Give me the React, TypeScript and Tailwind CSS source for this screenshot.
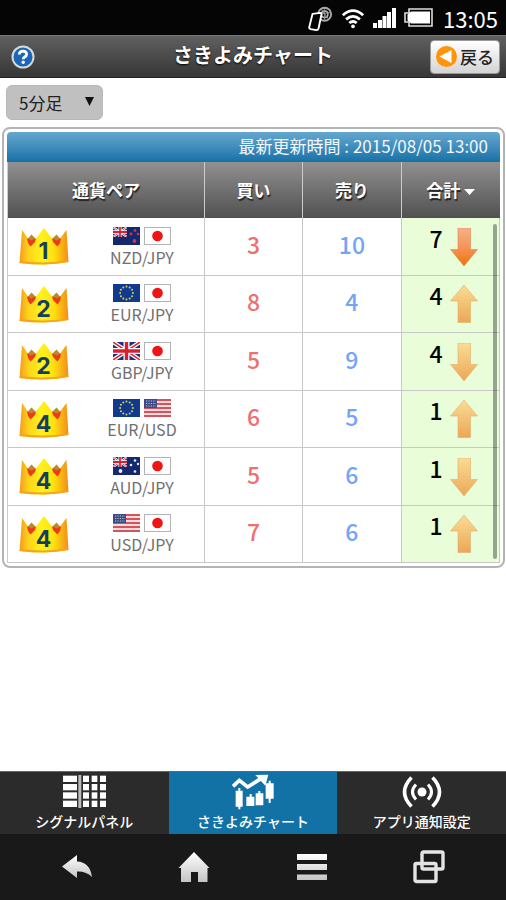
import React, { useState } from "react";

type FlagCode = "nz" | "au" | "jp" | "eu" | "gb" | "us";

interface PairRow {
  rank: number;
  pair: string;
  flags: [FlagCode, FlagCode];
  buy: number;
  sell: number;
  total: number;
  up: boolean;
}

const rows: PairRow[] = [
  { rank: 1, pair: "NZD/JPY", flags: ["nz", "jp"], buy: 3, sell: 10, total: 7, up: false },
  { rank: 2, pair: "EUR/JPY", flags: ["eu", "jp"], buy: 8, sell: 4, total: 4, up: true },
  { rank: 2, pair: "GBP/JPY", flags: ["gb", "jp"], buy: 5, sell: 9, total: 4, up: false },
  { rank: 4, pair: "EUR/USD", flags: ["eu", "us"], buy: 6, sell: 5, total: 1, up: true },
  { rank: 4, pair: "AUD/JPY", flags: ["au", "jp"], buy: 5, sell: 6, total: 1, up: false },
  { rank: 4, pair: "USD/JPY", flags: ["us", "jp"], buy: 7, sell: 6, total: 1, up: true },
];

function UnionJack({ w, h }: { w: number; h: number }) {
  return (
    <svg width={w} height={h} viewBox="0 0 27 18" preserveAspectRatio="none">
      <rect width="27" height="18" fill="#1c3180" />
      <path d="M0 0 27 18M27 0 0 18" stroke="#fff" strokeWidth="4" />
      <path d="M0 0 27 18M27 0 0 18" stroke="#d8283c" strokeWidth="1.5" />
      <path d="M13.500 0V18M0 9H27" stroke="#fff" strokeWidth="6" />
      <path d="M13.500 0V18M0 9H27" stroke="#d8202f" strokeWidth="3.400" />
    </svg>
  );
}

function Flag({ code }: { code: FlagCode }) {
  return (
    <svg width="27" height="18" viewBox="0 0 27 18" className="block" aria-hidden="true">
      {code === "gb" && <UnionJack w={27} h={18} />}
      {code === "jp" && (
        <>
          <rect x="0.5" y="0.5" width="26" height="17" fill="#fff" stroke="#b4b4b4" />
          <circle cx="13.500" cy="9" r="5.300" fill="#f01414" />
        </>
      )}
      {code === "eu" && (
        <>
          <rect width="27" height="18" fill="#123a8c" />
          {Array.from({ length: 12 }, (_, i) => (
            <circle
              key={i}
              cx={13.5 + 6.4 * Math.cos((i * Math.PI) / 6)}
              cy={9 + 6.4 * Math.sin((i * Math.PI) / 6)}
              r="1"
              fill="#d8cf5a"
            />
          ))}
        </>
      )}
      {code === "us" && (
        <>
          <rect width="27" height="18" fill="#f3dcdc" />
          {[0, 4, 8, 12, 16].map((y) => (
            <rect key={y} y={y} width="27" height="2" fill="#d4545e" />
          ))}
          <rect width="13" height="9" fill="#3c4a86" />
          {[2, 4.5, 7].map((y) => (
            <path key={y} d={`M2 ${y}H12`} stroke="#b9c2dd" strokeWidth="1" strokeDasharray="1.200 1.200" />
          ))}
        </>
      )}
      {(code === "nz" || code === "au") && (
        <>
          <rect width="27" height="18" fill="#14286e" />
          <UnionJack w={14} h={10} />
        </>
      )}
      {code === "nz" && (
        <g fill="#d0344e">
          <circle cx="22" cy="3.500" r="1.400" />
          <circle cx="18" cy="7" r="1.400" />
          <circle cx="25" cy="7" r="1.300" />
          <circle cx="21.500" cy="14" r="1.900" />
        </g>
      )}
      {code === "au" && (
        <g fill="#e6ecff">
          <circle cx="22" cy="3.500" r="1.300" />
          <circle cx="18" cy="8" r="1.300" />
          <circle cx="25" cy="7" r="1.200" />
          <circle cx="22" cy="14.500" r="1.300" />
          <circle cx="7.500" cy="14" r="1.900" />
        </g>
      )}
    </svg>
  );
}

function Crown({ rank }: { rank: number }) {
  return (
    <svg width="50" height="37" viewBox="0 0 50 37" role="img" aria-label={`${rank}位`} className="block">
      <defs>
        <linearGradient id="crown" x1="0" y1="0" x2="1" y2="0">
          <stop offset="0" stopColor="#f59a1c" />
          <stop offset="0.18" stopColor="#fdd31a" />
          <stop offset="0.45" stopColor="#fff21a" />
          <stop offset="0.7" stopColor="#ffe010" />
          <stop offset="1" stopColor="#f38c17" />
        </linearGradient>
      </defs>
      <path
        d="M3 2 9 10.500 17 10.500 25 0 33 10.500 41 10.500 47.500 2 49.500 34Q37 36 25 36.500 12 36.500 0.500 35Z"
        fill="url(#crown)"
      />
      <path d="M8 10.500H17L16 14 11.500 18.500 9 15ZM42 10.500H33L34 14 38.500 18.500 41 15Z" fill="#ee3a16" />
      <path d="M9 10.500 12.500 6.500 16.500 10.500 12 12.500ZM41 10.500 37.500 6.500 33.500 10.500 38 12.500Z" fill="#b98a2c" />
      <path d="M1 33Q25 36 49 32.500L49.500 34Q37 36 25 36.500 12 36.500 0.500 35Z" fill="#f5a51c" />
      <text
        x="24.500"
        y="31"
        textAnchor="middle"
        fill="#153f5c"
        className="font-['Inter',sans-serif] text-[23px] font-bold"
      >
        {rank}
      </text>
    </svg>
  );
}

function Arrow({ up, strong }: { up: boolean; strong: boolean }) {
  const fill = strong ? "url(#strongArrow)" : "url(#softArrow)";
  return (
    <svg width="28" height="38" viewBox="0 0 28 38" role="img" aria-label={up ? "上昇" : "下降"} className="block">
      <defs>
        <linearGradient id="strongArrow" x1="0" y1="0" x2="0" y2="1">
          <stop offset="0" stopColor="#f8b186" />
          <stop offset="0.5" stopColor="#f5945a" />
          <stop offset="1" stopColor="#f07208" />
        </linearGradient>
        <linearGradient id="softArrow" x1="0" y1="0" x2="0" y2="1">
          <stop offset="0" stopColor="#fbdc94" />
          <stop offset="1" stopColor="#eba758" />
        </linearGradient>
      </defs>
      <path
        d={up ? "M14 0 27.500 16H20.500V37.500H8V16H0.500Z" : "M8 0H20.500V21.500H27.500L14 38 0.500 21.500H8Z"}
        fill={fill}
        stroke={strong ? "#d98a50" : "#dfb06c"}
        strokeWidth="0.600"
      />
    </svg>
  );
}

function StatusBar() {
  return (
    <div className="flex h-[35px] items-center justify-end gap-2 bg-[#050505] pr-2 text-white">
      <svg width="26" height="28" viewBox="0 0 28 28" fill="none" aria-hidden="true">
        <circle cx="19" cy="10" r="7" stroke="#aaa" strokeWidth="2" />
        <circle cx="19" cy="10" r="3.500" stroke="#bbb" strokeWidth="1.600" />
        <path d="M15 4 23 15M12 10 26 8M19 3V17" stroke="#999" />
        <path d="M6 9.500 14 8.500Q16 8.500 15.500 10.500L12.500 25Q12 27 10 27L4 26Q2 25.500 2.500 23.500Z" fill="#050505" stroke="#fff" strokeWidth="2" />
      </svg>
      <svg width="24" height="24" viewBox="0 0 26 24" fill="none" stroke="#fff" strokeWidth="3" aria-hidden="true">
        <path d="M2 9Q13 -1 24 9M5.500 13.500Q13 7 20.500 13.500M9 17.500Q13 14 17 17.500" />
        <circle cx="13" cy="21" r="2" fill="#fff" stroke="none" />
      </svg>
      <svg width="23" height="20" viewBox="0 0 23 20" fill="#fff" aria-hidden="true">
        <path d="M0 15H4V20H0ZM5 12H9V20H5ZM9.500 8H13.500V20H9.500ZM14 4H18V20H14ZM19 0H23V20H19Z" />
      </svg>
      <svg width="29" height="19" viewBox="0 0 29 19" aria-hidden="true">
        <path d="M5 1H28V18H5V14H1V5H5Z" fill="#050505" stroke="#ddd" strokeWidth="1.600" />
        <path d="M7 3.500H26V15.500H7L3.500 12.500V6.500Z" fill="#fff" />
      </svg>
      <span className="pl-[2px] text-[22px] leading-none">13:05</span>
    </div>
  );
}

function Header() {
  return (
    <header className="grid h-[43px] grid-cols-[80px_1fr_80px] items-center border-t border-b border-t-[#777] border-b-[#222] bg-linear-to-b from-[#606060] to-[#363636]">
      <button type="button" aria-label="ヘルプ" className="ml-[11px] w-6">
        <svg width="24" height="24" viewBox="0 0 24 24">
          <circle cx="12" cy="12" r="10.500" fill="#1a66b8" stroke="#d8d8d8" strokeWidth="2" />
          <path d="M8.300 9.500Q8.500 6.200 12 6.200 15.600 6.300 15.600 9.200 15.600 11 13.600 12 12.200 12.700 12.200 14.200" fill="none" stroke="#fff" strokeWidth="2.800" />
          <circle cx="12.200" cy="17.300" r="1.700" fill="#fff" />
        </svg>
      </button>
      <h1 className="pb-1 text-center text-[20px] leading-6 font-bold text-white [text-shadow:0_1px_2px_#000]">
        さきよみチャート
      </h1>
      <button
        type="button"
        className="mr-[6px] flex h-[34px] items-center justify-center gap-[3px] justify-self-end rounded border border-[#999] bg-linear-to-b from-white to-[#d4d4d4] px-[5px] text-[17px] leading-6 font-medium whitespace-nowrap text-[#222]"
      >
        <svg width="21" height="21" viewBox="0 0 21 21" aria-hidden="true">
          <circle cx="10.500" cy="10.500" r="10.500" fill="#ff9408" />
          <path d="M3.500 10.500 15.500 4V17Z" fill="#fff" />
        </svg>
        戻る
      </button>
    </header>
  );
}

const headCell =
  "border-r border-[#ccc] p-0 text-center text-[17px] font-bold text-white last:border-r-0 [text-shadow:1px_2px_1px_#222]";
const bodyCell = "border-r border-b border-[#c8c8c8] p-0";

function SignalTable() {
  return (
    <section className="mr-px ml-[2px] mt-[7px] rounded-lg border-2 border-[#b4b4b4] p-[3px]">
      <div className="relative">
        <p className="h-[30px] rounded-t bg-linear-to-b from-[#64a8d0] to-[#1471a6] pr-3 text-right text-[17px] leading-7 text-[#f2f8fc]">
          最新更新時間 : 2015/08/05 13:00
        </p>
        <table className="w-full table-fixed border-separate border-spacing-0 border-l border-[#ccc]">
          <thead>
            <tr className="h-14 bg-linear-to-b from-[#919191] to-[#515151]">
              <th scope="col" className={`${headCell} w-2/5`}>通貨ペア</th>
              <th scope="col" className={`${headCell} w-1/5`}>買い</th>
              <th scope="col" className={`${headCell} w-1/5`}>売り</th>
              <th scope="col" className={`${headCell} w-1/5`}>
                <button type="button" className="inline-flex items-center gap-1 [text-shadow:inherit]">
                  合計
                  <svg width="11" height="6" viewBox="0 0 11 6" aria-hidden="true" className="mt-1">
                    <path d="M0 0H11L5.500 6Z" fill="#fff" />
                  </svg>
                </button>
              </th>
            </tr>
          </thead>
          <tbody>
            {rows.map((r) => (
              <tr key={r.pair} className="odd:h-[58px] even:h-[57px]">
                <td className={bodyCell}>
                  <div className="flex items-center">
                    <div className="ml-[11px]">
                      <Crown rank={r.rank} />
                    </div>
                    <div className="ml-[30px] flex w-[86px] flex-col items-center gap-[2px]">
                      <div className="flex gap-1">
                        <Flag code={r.flags[0]} />
                        <Flag code={r.flags[1]} />
                      </div>
                      <span className="text-[16px] leading-5 text-[#707070]">{r.pair}</span>
                    </div>
                  </div>
                </td>
                <td className={`${bodyCell} pb-[6px] text-center text-[23px] leading-7 font-medium text-[#f07070]`}>{r.buy}</td>
                <td className={`${bodyCell} pb-[6px] text-center text-[23px] leading-7 font-medium text-[#74a4f6]`}>{r.sell}</td>
                <td className={`${bodyCell} bg-[#e8fdd8]`}>
                  <div className="flex items-start gap-[7px] pl-7">
                    <span className="text-[23px] leading-5 font-medium text-black">{r.total}</span>
                    <Arrow up={r.up} strong={r.total >= 5} />
                  </div>
                </td>
              </tr>
            ))}
          </tbody>
        </table>
        <div className="absolute top-[92px] right-[3px] bottom-1 w-1 rounded-full bg-black/35" />
      </div>
    </section>
  );
}

function PanelIcon() {
  return (
    <svg width="43" height="33" viewBox="0 0 129 99" aria-hidden="true">
      {[2, 27, 52, 77].map((y) => (
        <g key={y} fill="#fff">
          <rect x="0" y={y} width="42" height="19" />
          <rect x="60" y={y} width="18" height="19" />
          <rect x="86" y={y} width="17" height="19" />
          <rect x="111" y={y} width="18" height="19" />
        </g>
      ))}
      <rect x="46" y="0" width="9" height="99" fill="#bbb" />
    </svg>
  );
}

function ChartIcon() {
  return (
    <svg width="42" height="36" viewBox="22 14 126 108" aria-hidden="true">
      <path d="M25 51 44 33 69 53 110 27" fill="none" stroke="#fff" strokeWidth="11" />
      <path d="M92 17 131 16 122 49Z" fill="#fff" />
      <path
        d="M41 56H47V64H54V112H47V120H41V112H33V64H41ZM75 74H81V82H89V110H65V82H75ZM101 65H107V72H116V108H93V72H101ZM132 34H138V42H147V88H138V101H132V88H123V42H132Z"
        fill="#fff"
      />
    </svg>
  );
}

function SignalIcon() {
  return (
    <svg width="40" height="32" viewBox="0 0 40 32" fill="none" stroke="#fff" aria-hidden="true">
      <circle cx="20" cy="16" r="4.500" fill="#fff" stroke="none" />
      <path d="M14 8.500Q7 16 14 23.500M26 8.500Q33 16 26 23.500" strokeWidth="3" />
      <path d="M9.500 1.500Q-4.500 16 9.500 30.500M30.500 1.500Q44.500 16 30.500 30.500" strokeWidth="3.500" />
    </svg>
  );
}

const tabs = [
  { label: "シグナルパネル", icon: <PanelIcon /> },
  { label: "さきよみチャート", icon: <ChartIcon /> },
  { label: "アプリ通知設定", icon: <SignalIcon /> },
];

function TabBar() {
  const [active, setActive] = useState(1);
  return (
    <nav className="grid h-[63px] grid-cols-3 border-t border-[#666] bg-[#2b2b2b]">
      {tabs.map((t, i) => (
        <button
          key={t.label}
          type="button"
          onClick={() => setActive(i)}
          className={`flex flex-col items-center text-[14px] leading-5 font-medium text-white ${
            i === active ? "bg-[#1272a5]" : ""
          }`}
        >
          <span className="flex h-[39px] items-center">{t.icon}</span>
          {t.label}
        </button>
      ))}
    </nav>
  );
}

function SystemNav() {
  return (
    <div className="flex h-[66px] items-center justify-around bg-[#191919] px-[18px]">
      <svg width="0" height="0" className="absolute">
        <defs>
          <linearGradient id="metal" x1="0" y1="0" x2="0" y2="1">
            <stop offset="0" stopColor="#fff" />
            <stop offset="1" stopColor="#c4c4c4" />
          </linearGradient>
        </defs>
      </svg>
      <button type="button" aria-label="戻る（システム）">
        <svg width="32" height="32" viewBox="0 0 32 32">
          <path d="M1 15.500 16 4V10.500Q29 11 31 26 25 20 16 20.500V27Z" fill="url(#metal)" />
        </svg>
      </button>
      <button type="button" aria-label="ホーム">
        <svg width="32" height="32" viewBox="0 0 32 32">
          <path d="M16 1 31.500 17H29.500V31H20V21H13V31H3V17H0.500Z" fill="url(#metal)" />
        </svg>
      </button>
      <button type="button" aria-label="メニュー">
        <svg width="32" height="32" viewBox="0 0 32 32">
          <path d="M1 3H31V9H1ZM1 13H31V19H1ZM1 23.500H31V29H1Z" fill="url(#metal)" />
        </svg>
      </button>
      <button type="button" aria-label="履歴">
        <svg width="32" height="34" viewBox="0 0 32 34" fill="none" stroke="#e4e4e4" strokeWidth="3.400">
          <rect x="9" y="2" width="21" height="17" rx="1.500" />
          <rect x="2" y="13.500" width="21" height="18" rx="1.500" />
        </svg>
      </button>
    </div>
  );
}

export default function App() {
  return (
    <div className="flex min-h-screen flex-col bg-white font-['Noto_Sans_CJK_JP',sans-serif]">
      <StatusBar />
      <Header />
      <main className="flex-1">
        <div className="relative mt-[7px] ml-[6px] w-[97px]">
          <select
            aria-label="足種"
            defaultValue="5"
            className="block h-[35px] w-full appearance-none rounded-md border border-[#b8b8b8] bg-[#c0c0c0] pl-3 text-[17px] text-[#222]"
          >
            <option value="1">1分足</option>
            <option value="5">5分足</option>
            <option value="60">60分足</option>
          </select>
          <svg width="9" height="9" viewBox="0 0 9 9" aria-hidden="true" className="pointer-events-none absolute top-3 right-[9px]">
            <path d="M0 0H9L4.500 9Z" fill="#111" />
          </svg>
        </div>
        <SignalTable />
      </main>
      <TabBar />
      <SystemNav />
    </div>
  );
}
